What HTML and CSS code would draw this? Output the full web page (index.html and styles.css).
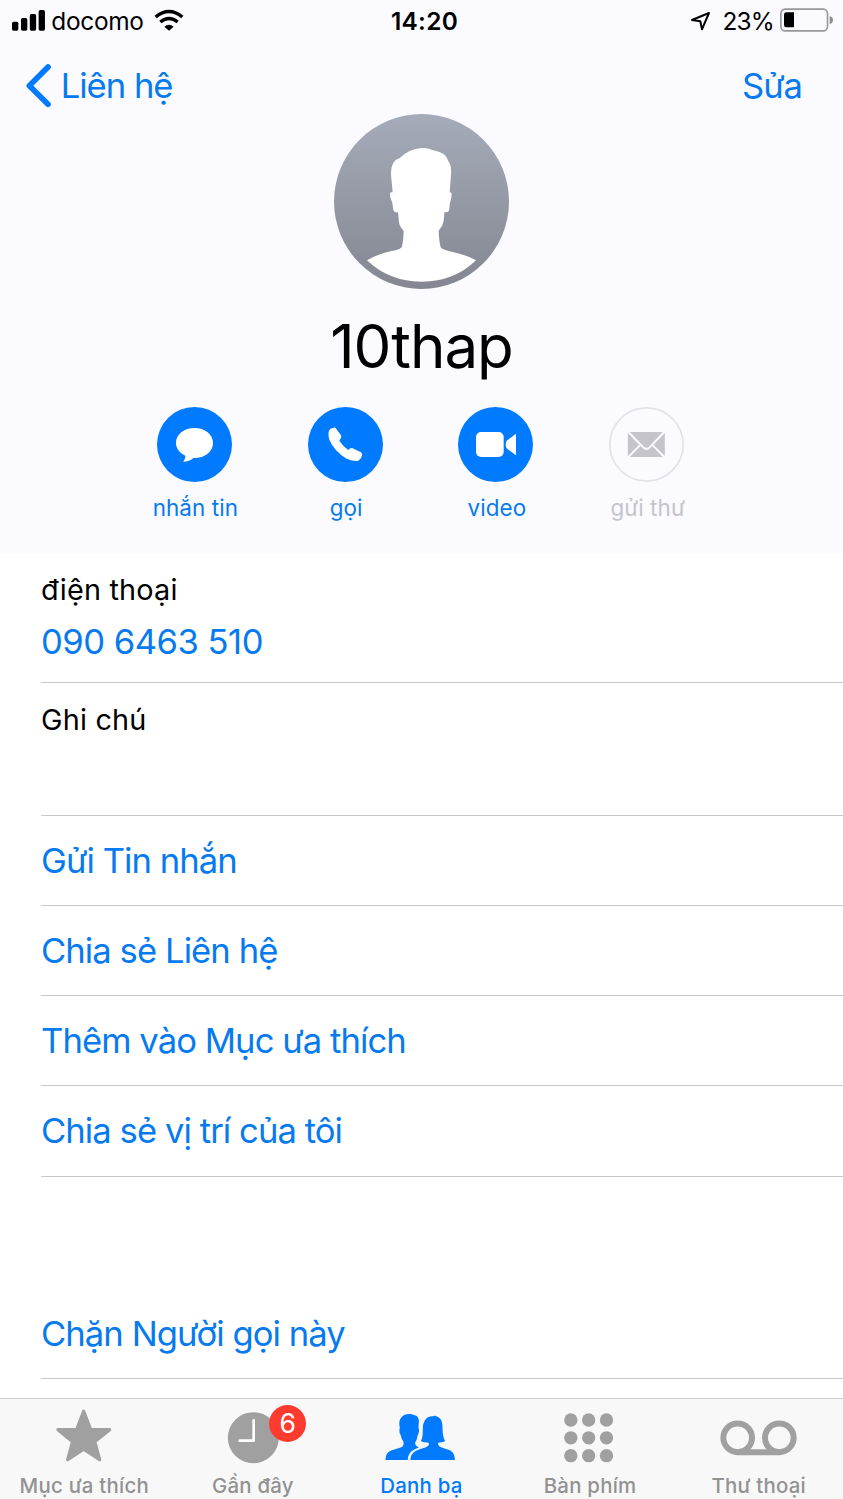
FILE: index.html
```html
<!DOCTYPE html>
<html lang="vi">
<head>
<meta charset="utf-8">
<title>10thap</title>
<link rel="stylesheet" href="styles.css">
</head>
<body>
<div class="screen">
  <header class="header">
    <div class="status">
      <div class="status-left">
        <svg class="signal" viewBox="36 27 100 68"><rect x="36" y="65" width="19" height="27" rx="5"/><rect x="63" y="54" width="19" height="38" rx="5"/><rect x="89.500" y="42" width="19" height="50" rx="5"/><rect x="116" y="30" width="19" height="62" rx="5"/></svg>
        <span class="carrier">docomo</span>
        <svg class="wifi" viewBox="462 27 90 68"><g fill="none" stroke="#000" stroke-width="10.500"><path d="M467 51Q507 18 547 51"/><path d="M481 66Q507 45 533 66"/></g><path d="M493 80Q507 69 521 80L507 92Z"/></svg>
      </div>
      <span class="clock">14:20</span>
      <div class="status-right">
        <svg class="location" viewBox="150 30 64 64"><path d="M207 39L156 60L181 64L186 88Z" fill="none" stroke="#000" stroke-width="6" stroke-linejoin="round"/></svg>
        <span class="percent">23%</span>
        <svg class="battery" viewBox="420 25 162 72"><rect x="422.500" y="28.500" width="140" height="65" rx="13" fill="none" stroke="#98989c" stroke-width="5"/><path d="M439 38H462V83H439Q432 83 432 76V45Q432 38 439 38Z"/><path d="M569 49Q579 52 579 61Q579 70 569 73Z" fill="#8c8c90"/></svg>
      </div>
    </div>
    <nav class="nav">
      <a class="back"><svg class="chevron" viewBox="75 190 80 135"><path d="M144 202L88 258L144 314" fill="none" stroke="#007aff" stroke-width="17" stroke-linecap="round" stroke-linejoin="round"/></svg><span class="back-text">Liên hệ</span></a>
      <a class="edit">Sửa</a>
    </nav>
    <svg class="avatar" viewBox="42 27 525 525">
      <defs><linearGradient id="av" x1="0" y1="0" x2="0" y2="1"><stop offset="0" stop-color="#a5abb9"/><stop offset="1" stop-color="#848791"/></linearGradient></defs>
      <circle cx="304.500" cy="289.500" r="262.500" fill="url(#av)"/>
      <path fill="#fff" d="M305 129Q323 128 339 136Q358 139 371 147Q382 156 386 170Q395 180 393 210L389 262Q396 261 395 270Q394 283 389 297Q389 318 383 321L373 322Q373 349 366 363L356 377Q357 408 362 427Q370 436 395 440Q438 449 468 466Q403 530 305 530Q207 530 141 466Q171 448 211 439Q240 434 246 425Q251 402 251 378Q237 362 237 352L234 322Q222 324 220 316L217 293Q209 278 210 264Q212 261 218 262L213 210Q211 168 238 160Q268 131 305 129Z"/>
    </svg>
    <h1 class="name">10thap</h1>
    <div class="actions">
      <div class="action">
        <svg class="disc" viewBox="51 36 225 225"><circle cx="163.500" cy="148.500" r="112.500" fill="#007aff"/><path fill="#fff" d="M163 99C195 99 219 118 219 144C219 171 194 190 160 189C152 197 142 200 129 200C133 196 136 190 136 182C118 173 108 160 108 144C108 118 132 99 163 99Z"/></svg>
        <span class="action-text">nhắn tin</span>
      </div>
      <div class="action">
        <svg class="disc" viewBox="503 36 225 225"><circle cx="615.500" cy="148.500" r="112.500" fill="#007aff"/><path fill="#fff" d="M570 101L580 98Q585 97 588 102L602 121Q605 127 600 132L597 137Q606 152 624 165L630 160Q635 157 640 161L662 172Q667 176 665 181Q662 194 652 198Q636 199 619 191Q581 168 567 134Q560 112 570 101Z"/></svg>
        <span class="action-text">gọi</span>
      </div>
      <div class="action">
        <svg class="disc" viewBox="54 36 225 225"><circle cx="166.500" cy="148.500" r="112.500" fill="#007aff"/><rect x="108" y="111" width="83" height="75" rx="15" fill="#fff"/><path fill="#fff" d="M228 116V181L202 162Q197 158 197 149Q197 140 202 136Z"/></svg>
        <span class="action-text">video</span>
      </div>
      <div class="action disabled">
        <svg class="disc" viewBox="507.500 36 225 225"><circle cx="620" cy="148.500" r="110" fill="none" stroke="#e2e2e8" stroke-width="5"/><g fill="#c5c4cb"><path d="M570 111H669L629 154Q620 163 611 154Z"/><path d="M564 114L598 149L564 183Z"/><path d="M675 114V183L641 149Z"/><path d="M602 153L609 160Q620 170 631 160L637 153L669 186H570Z"/></g></svg>
        <span class="action-text">gửi thư</span>
      </div>
    </div>
  </header>
  <main class="details">
    <section class="field phone"><span class="label">điện thoại</span><span class="value">090 6463 510</span></section>
    <section class="field notes"><span class="label">Ghi chú</span></section>
    <a class="row">Gửi Tin nhắn</a>
    <a class="row">Chia sẻ Liên hệ</a>
    <a class="row">Thêm vào Mục ưa thích</a>
    <a class="row">Chia sẻ vị trí của tôi</a>
    <a class="row block">Chặn Người gọi này</a>
  </main>
  <footer class="tabs">
    <div class="tab"><svg class="tab-icon" viewBox="118 48 270 180"><path d="M252 64L273 119H330L285 155L300 209L252 177L204 209L219 155L175 119H231Z" fill="#a0a0a0" stroke="#a0a0a0" stroke-width="10" stroke-linejoin="round"/></svg><span class="tab-text">Mục ưa thích</span></div>
    <div class="tab"><svg class="tab-icon" viewBox="624 48 270 180"><circle cx="760" cy="143" r="76.500" fill="#a0a0a0"/><path d="M761 91V152H719" fill="none" stroke="#fff" stroke-width="8" stroke-linecap="round" stroke-linejoin="round"/></svg><span class="badge">6</span><span class="tab-text">Gần đây</span></div>
    <div class="tab active"><svg class="tab-icon" viewBox="49.500 48 270 180"><g fill="#007aff"><path d="M149 72C158 72 162 74 165 76C175 78 179 86 178 97L177 113C180 118 179 130 174 137C173 147 170 152 167 157C167 166 170 169 178 173C158 178 145 190 145 210H78C78 190 88 183 102 179C120 175 131 172 132 163V155C127 149 125 143 124 136C119 131 119 119 121 114C118 100 119 89 125 83C131 75 139 72 149 72Z"/><path d="M220 79C225 76 230 77 233 80C245 84 249 96 249 112C249 132 252 146 257 153C251 157 244 158 236 158V163C238 171 250 174 262 178C277 182 286 190 286 210H153C153 193 162 184 177 179C192 175 207 171 208 163V158C198 158 190 157 184 153C189 146 190 132 190 117C190 98 197 79 220 79Z"/></g></svg><span class="tab-text">Danh bạ</span></div>
    <div class="tab"><svg class="tab-icon" viewBox="555.500 48 270 180"><g fill="#a0a0a0"><circle cx="633" cy="90" r="20"/><circle cx="686.500" cy="90" r="20"/><circle cx="740" cy="90" r="20"/><circle cx="633" cy="143.500" r="20"/><circle cx="686.500" cy="143.500" r="20"/><circle cx="740" cy="143.500" r="20"/><circle cx="633" cy="197" r="20"/><circle cx="686.500" cy="197" r="20"/><circle cx="740" cy="197" r="20"/></g></svg><span class="tab-text">Bàn phím</span></div>
    <div class="tab"><svg class="tab-icon" viewBox="221 48 270 180"><g fill="none" stroke="#a0a0a0" stroke-width="18"><circle cx="292" cy="143.500" r="43"/><circle cx="417" cy="143.500" r="43"/><path d="M292 186.500H417"/></g></svg><span class="tab-text">Thư thoại</span></div>
  </footer>
</div>
</body>
</html>
```
FILE: styles.css
```css
* { box-sizing: border-box; }
body { margin: 0; background: #fff; font-family: Inter, Roboto, sans-serif; color: #000; }
svg { display: block; flex: none; }
.screen { width: 843px; height: 1499px; display: flex; flex-direction: column; overflow: hidden; }
.header { height: 553px; background: #fafaff; display: flex; flex-direction: column; align-items: center; flex: none; }
.status { width: 100%; height: 42px; display: grid; grid-template-columns: 1fr auto 1fr; align-items: center; padding: 0 9px 0 12px; font-size: 24.400px; line-height: 42px; white-space: nowrap; flex: none; }
.status-left, .status-right { display: flex; align-items: center; }
.status-right { justify-content: flex-end; }
.signal { width: 33.300px; height: 22.700px; margin-top: -2px; }
.carrier { margin-left: 6px; letter-spacing: -0.3px; }
.wifi { width: 30px; height: 22.700px; margin: -2px 0 0 10px; }
.clock { font-weight: 600; letter-spacing: 0.3px; padding-left: 3px; }
.location { width: 21.300px; height: 21.300px; }
.percent { margin-left: 11px; letter-spacing: -0.8px; }
.battery { width: 54px; height: 24px; margin: -2px 0 0 6px; }
.nav { width: 100%; height: 72px; padding: 14px 41px 0 25px; display: flex; justify-content: space-between; font-size: 34.600px; line-height: 58px; color: #067aef; letter-spacing: -1px; flex: none; }
.back { display: flex; align-items: center; }
.chevron { width: 26.700px; height: 45px; margin-right: 9px; }
.avatar { width: 175px; height: 175px; }
.name { margin: 21px 0 0; font-size: 60px; line-height: 72px; font-weight: 400; letter-spacing: -1px; }
.actions { width: 603px; margin: 25px 0 0 -2px; display: grid; grid-template-columns: repeat(4, 1fr); }
.action { display: flex; flex-direction: column; align-items: center; color: #067aef; }
.disc { width: 75px; height: 75px; }
.action-text { margin-top: 11.500px; padding-left: 2px; font-size: 22.400px; line-height: 28px; letter-spacing: 0.1px; white-space: nowrap; }
.disabled { color: #c5c4cb; }
.details { flex: 1; padding-left: 41px; display: flex; flex-direction: column; }
.field { display: flex; flex-direction: column; border-bottom: 1px solid #c8c7cc; flex: none; }
.phone { height: 129.500px; padding-top: 19px; }
.notes { height: 133px; padding-top: 19px; }
.label { font-size: 28.800px; line-height: 36px; letter-spacing: 0.200px; }
.value { margin-top: 11px; font-size: 34.600px; line-height: 44px; color: #067aef; letter-spacing: -0.5px; }
.row { height: 90.250px; line-height: 88.500px; font-size: 34.600px; letter-spacing: -0.920px; color: #067aef; border-bottom: 1px solid #c8c7cc; flex: none; white-space: nowrap; }
.block { margin-top: 112px; }
.tabs { height: 101px; background: #f8f8f8; border-top: 1px solid #cbcbcb; display: grid; grid-template-columns: repeat(5, 1fr); flex: none; }
.tab { position: relative; padding-top: 7px; display: flex; flex-direction: column; align-items: center; color: #929292; }
.tab-icon { width: 90px; height: 60px; }
.tab-text { margin-top: 5.500px; font-size: 20.400px; line-height: 28px; font-weight: 500; letter-spacing: 0.25px; white-space: nowrap; }
.active { color: #007aff; }
.badge { position: absolute; left: 100.500px; top: 6px; width: 37px; height: 37px; border-radius: 50%; background: #ff3b30; color: #fff; text-align: center; font-size: 26.500px; line-height: 37px; }
```
